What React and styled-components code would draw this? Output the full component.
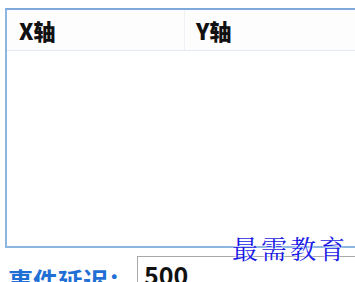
import React from "react";
import styled, { createGlobalStyle } from "styled-components";

const GlobalStyle = createGlobalStyle`
  html, body {
    margin: 0;
    padding: 0;
    background: #fff;
    overflow: hidden;
  }
  body {
    font-family: "Noto Sans CJK SC", "Liberation Sans", sans-serif;
  }
`;

const Page = styled.div`
  position: relative;
  width: 355px;
  height: 282px;
  overflow: hidden;
  padding: 8px 0 0 5px;
  box-sizing: border-box;
`;

const Grid = styled.div`
  width: 420px;
  height: 240px;
  box-sizing: border-box;
  border: 2px solid #8db5e2;
  border-top-color: #7ea9db;
  background: #fff;
`;

const HeadRow = styled.div`
  display: grid;
  grid-template-columns: 178px 1fr;
  height: 40px;
  border-bottom: 1px solid #e4eaf3;
  background: #fdfdfe;
`;

const HeadCell = styled.div`
  display: flex;
  align-items: center;
  padding-left: ${(p) => p.$pad || 11}px;
  font-size: 22px;
  font-weight: 900;
  color: #111;
  border-right: 1px solid #eef1f6;
`;

const FieldRow = styled.div`
  display: flex;
  align-items: flex-start;
  margin-top: 8px;
  padding-left: 3px;
`;

const Label = styled.div`
  flex-shrink: 0;
  width: 129px;
  margin-top: 6px;
  font-size: 25px;
  font-weight: 700;
  color: #1f6fd4;
  white-space: nowrap;
  overflow: hidden;
`;

const Input = styled.div`
  flex-shrink: 0;
  width: 240px;
  height: 34px;
  border: 1px solid #a9a9a9;
  border-right: none;
  padding: 2px 0 0 6px;
  font-size: 25px;
  font-weight: 700;
  color: #111;
  line-height: 30px;
`;

const Watermark = styled.div`
  position: absolute;
  left: 232px;
  top: 229px;
  font-family: "Noto Serif CJK SC", "Noto Sans CJK SC", serif;
  font-size: 26px;
  font-weight: 400;
  letter-spacing: 3px;
  color: #1a1ae6;
  text-shadow: 0 0 2px #fff, 0 0 2px #fff;
`;

export default function App() {
  return (
    <>
      <GlobalStyle />
      <Page>
        <Grid>
          <HeadRow>
            <HeadCell $pad={12}>X轴</HeadCell>
            <HeadCell $pad={11}>Y轴</HeadCell>
          </HeadRow>
        </Grid>
        <FieldRow>
          <Label>事件延迟：</Label>
          <Input>500</Input>
        </FieldRow>
        <Watermark>最需教育</Watermark>
      </Page>
    </>
  );
}
